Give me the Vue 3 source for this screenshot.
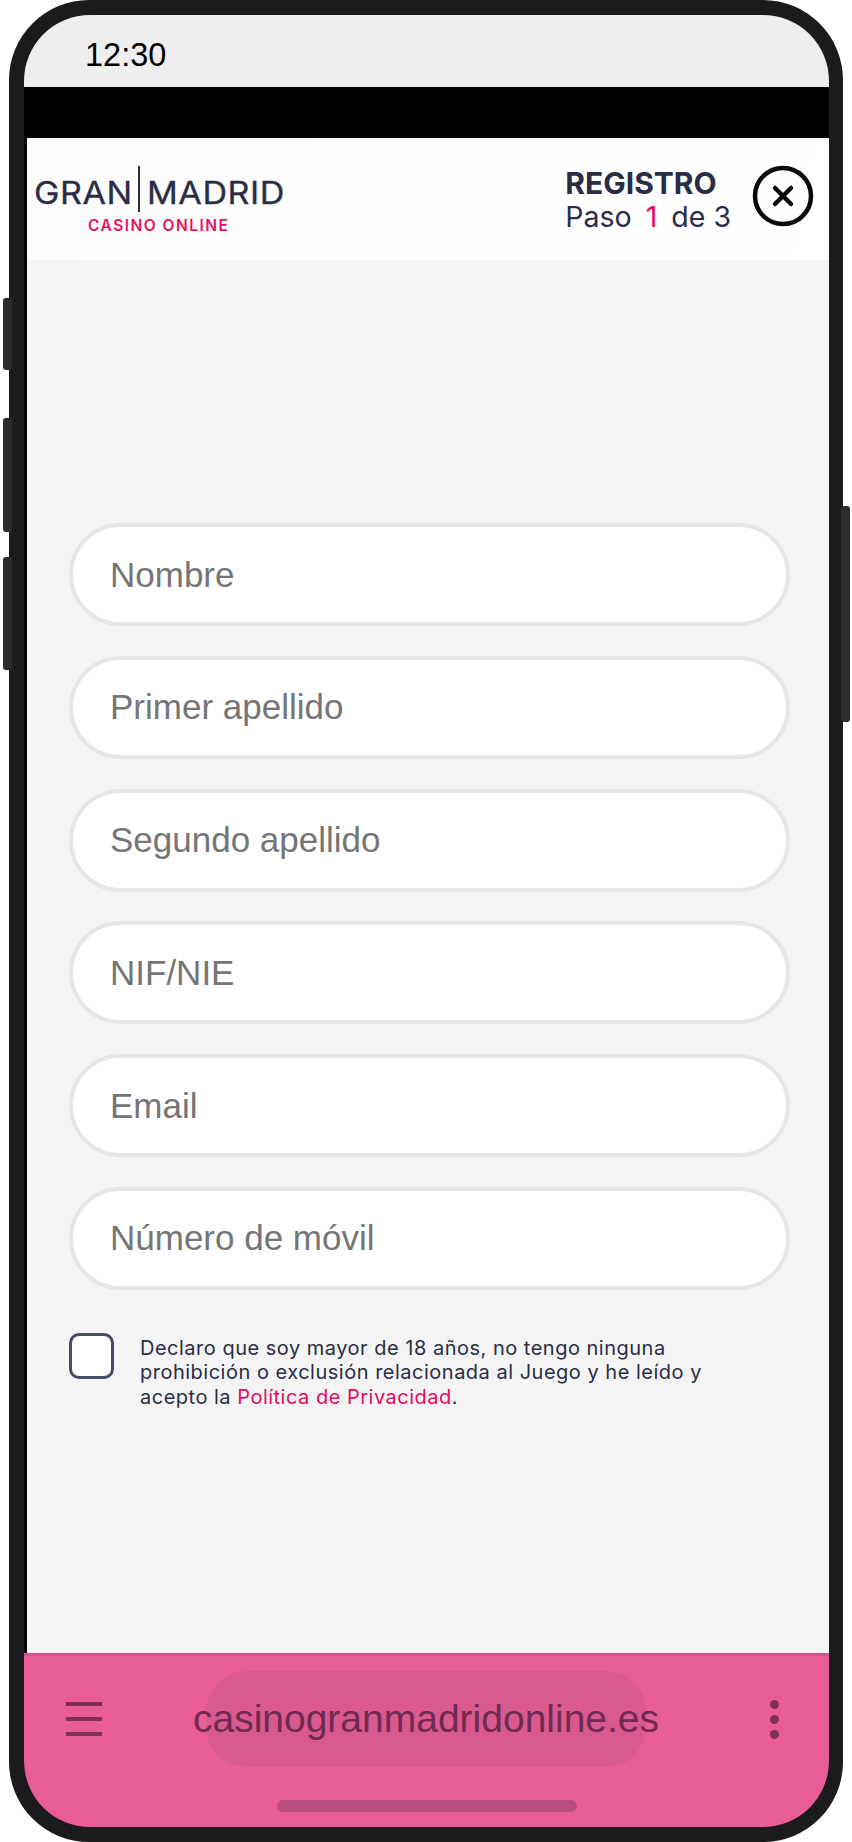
<template>
  <div class="device">
    <span class="side-btn left b1"></span>
    <span class="side-btn left b2"></span>
    <span class="side-btn left b3"></span>
    <span class="side-btn right b4"></span>

    <div class="screen">
      <div class="status-bar">12:30</div>
      <div class="black-bar"></div>

      <div class="content">
        <header class="header">
          <div class="logo">
            <div class="logo-main">
              <span class="logo-word gran">GRAN</span>
              <span class="logo-sep"></span>
              <span class="logo-word madrid">MADRID</span>
            </div>
            <div class="logo-sub">CASINO ONLINE</div>
          </div>
          <div class="steps">
            <div class="steps-title">REGISTRO</div>
            <div class="steps-count">Paso <span class="pink num">1</span> de 3</div>
          </div>
          <svg class="close" width="64" height="64" viewBox="0 0 64 64" fill="none">
            <circle cx="32" cy="32" r="28" stroke="#0a0a0a" stroke-width="4.5" />
            <path d="M24 24L40 40M40 24L24 40" stroke="#0a0a0a" stroke-width="4.5" stroke-linecap="round" />
          </svg>
        </header>

        <form class="form" @submit.prevent>
          <input
            v-for="field in fields"
            :key="field"
            class="field"
            type="text"
            :placeholder="field"
          />
          <label class="consent">
            <span class="check"></span>
            <span class="consent-text">
              Declaro que soy mayor de 18 años, no tengo ninguna<br />
              prohibición o exclusión relacionada al Juego y he leído y<br />
              acepto la <a class="pink" href="#">Política de Privacidad</a>.
            </span>
          </label>
        </form>
      </div>

      <footer class="browser-bar">
        <div class="browser-row">
          <div class="burger"><i></i><i></i><i></i></div>
          <div class="url-pill">
            <span class="url">casinogranmadridonline.es</span>
          </div>
          <div class="dots"><i></i><i></i><i></i></div>
        </div>
        <div class="home-bar"></div>
      </footer>
    </div>
  </div>
</template>

<script setup>
const fields = [
  "Nombre",
  "Primer apellido",
  "Segundo apellido",
  "NIF/NIE",
  "Email",
  "Número de móvil",
];
</script>

<style>
html,
body {
  background: #fff;
}
</style>

<style scoped>
.device {
  position: relative;
  box-sizing: border-box;
  width: 834px;
  height: 1842px;
  margin-left: 9px;
  padding: 15px 14px 15px 15px;
  background: #1b1b1d;
  border-radius: 80px;
}

.side-btn {
  position: absolute;
  width: 9px;
  background: #2c2c2e;
  border-radius: 3px;
}
.side-btn.left {
  left: -6px;
}
.side-btn.right {
  right: -7px;
}
.b1 {
  top: 298px;
  height: 72px;
}
.b2 {
  top: 418px;
  height: 114px;
}
.b3 {
  top: 557px;
  height: 113px;
}
.b4 {
  top: 506px;
  height: 216px;
}

.screen {
  display: flex;
  flex-direction: column;
  height: 100%;
  overflow: hidden;
  background: #000;
  border-radius: 66px;
}

.status-bar {
  box-sizing: border-box;
  height: 72px;
  padding: 21px 0 0 61px;
  background: #eeeeee;
  color: #000;
  font: 32.5px/38px "Liberation Sans", sans-serif;
}

.black-bar {
  height: 51px;
}

.content {
  flex: 1;
  margin-left: 3px;
  background: #f4f4f4;
}

.header {
  box-sizing: border-box;
  display: flex;
  align-items: center;
  height: 122px;
  padding: 0 14px 0 7px;
  background: linear-gradient(100deg, #fcfcfc, #fff);
  font-family: Inter, sans-serif;
  color: #2a2d45;
}

.logo {
  flex: 1;
}
.logo-main {
  display: flex;
  align-items: center;
  height: 46px;
  margin-top: 3px;
}
.logo-word {
  display: inline-block;
  margin-top: 8px;
  font: 400 31px/46px Inter, sans-serif;
  letter-spacing: 0.5px;
  white-space: nowrap;
  transform: scaleX(1.1);
  transform-origin: left center;
  -webkit-text-stroke: 0.3px #2a2d45;
}
.gran {
  width: 97px;
}
.logo-sep {
  flex: none;
  width: 2px;
  height: 46px;
  margin: 0 7px;
  background: #2a2d45;
}
.logo-sub {
  margin: 5px 0 0 54px;
  color: #e8125f;
  font: 600 15.5px/18px Inter, sans-serif;
  letter-spacing: 1.5px;
}

.steps {
  margin-right: 20px;
}
.steps-title {
  font-size: 30px;
  font-weight: 700;
  line-height: 36px;
}
.steps-count {
  font-size: 28.5px;
  line-height: 32px;
}

.pink {
  color: #e6095f;
  text-decoration: none;
}
.num {
  margin: 0 6px;
}

.close {
  margin-top: -7px;
}

.form {
  display: flex;
  flex-direction: column;
  gap: 29.8px;
  padding: 263px 39px 0 42px;
}

.field {
  box-sizing: border-box;
  width: 100%;
  height: 103px;
  padding: 0 36px 0 37px;
  background: #fff;
  border: 4px solid #e6e6e6;
  border-radius: 52px;
  outline: none;
  font: 35px "Liberation Sans", sans-serif;
}
.field::placeholder {
  color: #757575;
  opacity: 1;
}

.consent {
  display: flex;
  gap: 26px;
  margin-top: 13px;
}
.check {
  box-sizing: border-box;
  flex: none;
  width: 45px;
  height: 46px;
  background: #fff;
  border: 3px solid #474a63;
  border-radius: 10px;
}
.consent-text {
  margin-top: 3px;
  color: #2a2d45;
  font: 20px/24.6px Inter, sans-serif;
  letter-spacing: 0.5px;
  white-space: nowrap;
}

.browser-bar {
  box-sizing: border-box;
  height: 174px;
  background: #e95d96;
  border-top: 3px solid #d2558b;
}
.browser-row {
  display: flex;
  align-items: center;
  justify-content: space-between;
  height: 96px;
  margin-top: 15px;
  padding: 0 50px 0 42px;
}
.burger {
  display: flex;
  flex-direction: column;
  gap: 11px;
  width: 36px;
}
.burger i {
  height: 4px;
  background: #7a3154;
}
.url-pill {
  display: flex;
  justify-content: center;
  align-items: center;
  width: 440px;
  height: 96px;
  margin-right: 20px;
  background: #da5a8f;
  border-radius: 40px;
}
.url {
  flex: none;
  color: #70294f;
  font: 39px "Liberation Sans", sans-serif;
}
.dots {
  display: flex;
  flex-direction: column;
  gap: 6px;
}
.dots i {
  width: 9px;
  height: 9px;
  background: #7a3154;
  border-radius: 50%;
}
.home-bar {
  width: 300px;
  height: 12px;
  margin: 33px auto 0;
  background: #b84e7d;
  border-radius: 6px;
}
</style>
